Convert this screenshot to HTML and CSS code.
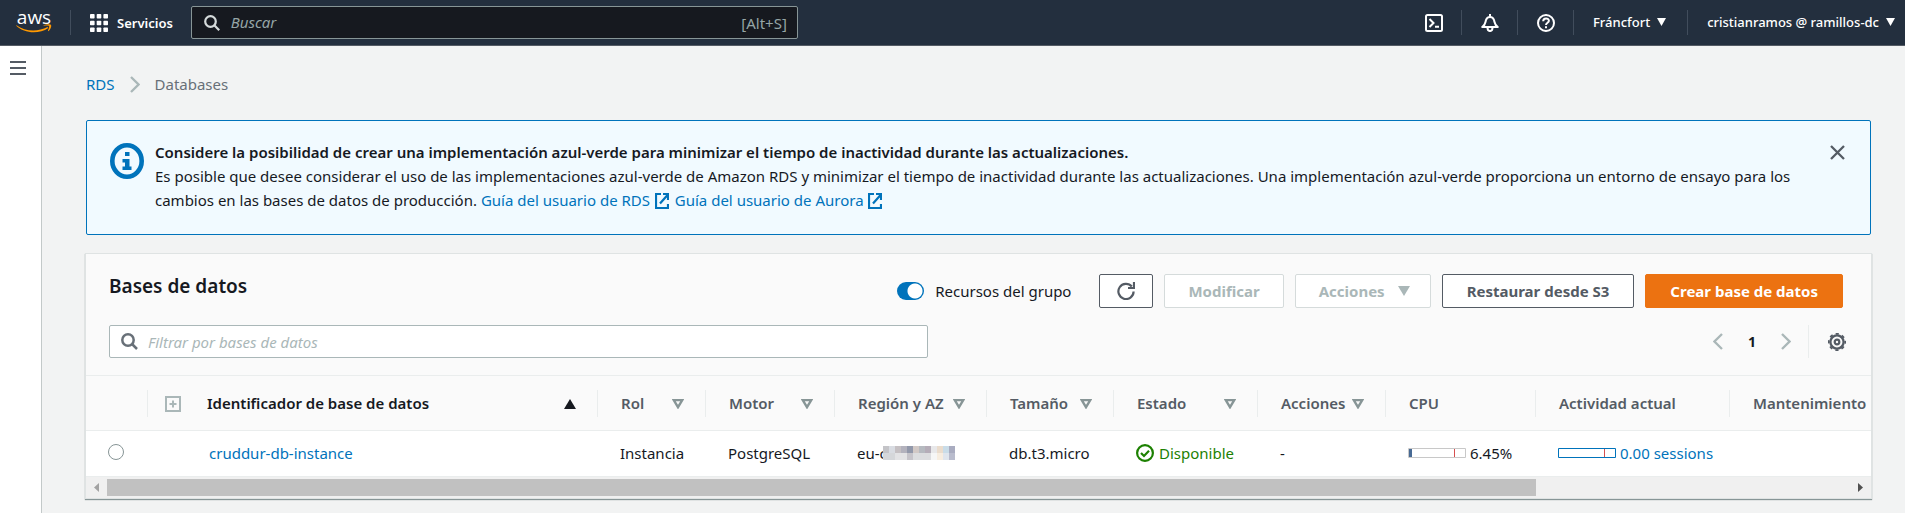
FILE: index.html
```html
<!DOCTYPE html>
<html lang="es">
<head>
<meta charset="utf-8">
<meta name="viewport" content="width=device-width, initial-scale=1">
<title>RDS - Databases</title>
<link rel="stylesheet" href="styles.css">
</head>
<body>
<header class="topbar">
  <a class="logo" href="#" aria-label="aws">
    <span class="logo-text">aws</span>
    <svg class="logo-smile" viewBox="0 0 36 9" aria-hidden="true"><path d="M0.5 1.2C9 7.6 22 8 31.5 3l.8 1C23 10.500 8 9.500.2 1.800z" fill="#f90"/><path d="M27.500 1.200C30 .2 34 0 35 .9c.7 1-.3 4.500-2.600 6.300l-.5-.4c.8-1.700 1.500-3.900 1.200-4.700-.5-.6-3.500-.5-5.400-.4z" fill="#f90"/></svg>
  </a>
  <button class="services" type="button">
    <svg viewBox="0 0 18 18" width="18" height="18" fill="#fff" aria-hidden="true"><rect width="4.600" height="4.600" rx=".8"/><rect x="6.700" width="4.600" height="4.600" rx=".8"/><rect x="13.400" width="4.600" height="4.600" rx=".8"/><rect y="6.700" width="4.600" height="4.600" rx=".8"/><rect x="6.700" y="6.700" width="4.600" height="4.600" rx=".8"/><rect x="13.400" y="6.700" width="4.600" height="4.600" rx=".8"/><rect y="13.400" width="4.600" height="4.600" rx=".8"/><rect x="6.700" y="13.400" width="4.600" height="4.600" rx=".8"/><rect x="13.400" y="13.400" width="4.600" height="4.600" rx=".8"/></svg>
    Servicios
  </button>
  <div class="search global-search">
    <svg viewBox="0 0 16 16" width="16" height="16" fill="none" stroke="#d5dbdb" stroke-width="2.200" aria-hidden="true"><circle cx="6.500" cy="6.500" r="5.300"/><path d="M10.300 10.300l4.900 4.900"/></svg>
    <input type="search" placeholder="Buscar" aria-label="Buscar">
    <span class="shortcut">[Alt+S]</span>
  </div>
  <nav class="tools" aria-label="Cuenta">
    <button class="tool" type="button" aria-label="CloudShell"><svg viewBox="0 0 18 18" width="18" height="18" fill="none" stroke="#fff" stroke-width="2" aria-hidden="true"><rect x="1" y="1" width="16" height="16" rx="1.500"/><path d="M4.500 5l4 4-4 4M10 12.700h4"/></svg></button>
    <button class="tool" type="button" aria-label="Notificaciones"><svg viewBox="0 0 18 18" width="18" height="18" fill="none" stroke="#fff" stroke-width="2" stroke-linejoin="round" aria-hidden="true"><path d="M1.200 13h15.600C13.500 11 13.800 8.500 13 6 12.400 4 11 2.900 9 2.900S5.600 4 5 6c-.8 2.500-.5 5-3.800 7zM6.500 13.500c0 4.700 5 4.700 5 0M9 0v3"/></svg></button>
    <button class="tool" type="button" aria-label="Ayuda"><svg viewBox="0 0 18 18" width="18" height="18" fill="none" stroke="#fff" stroke-width="2" aria-hidden="true"><circle cx="9" cy="9" r="8"/><path d="M6.200 7.200c0-3.800 5.700-3.500 5.700-.4C11.900 8.900 9 8.600 9 11M9 12.200v2"/></svg></button>
    <button class="tool tool-text region" type="button">Fráncfort <svg class="caret" viewBox="0 0 9 8" aria-hidden="true"><path d="M0 0h9L4.500 8z" fill="#fff"/></svg></button>
    <button class="tool tool-text account" type="button">cristianramos @ ramillos-dc <svg class="caret" viewBox="0 0 9 8" aria-hidden="true"><path d="M0 0h9L4.500 8z" fill="#fff"/></svg></button>
  </nav>
</header>

<div class="shell">
  <aside class="rail">
    <button class="menu" type="button" aria-label="Abrir navegación"><svg viewBox="0 0 16 14" width="16" height="14" fill="#545b64" aria-hidden="true"><path d="M0 0h16v2H0zM0 6h16v2H0zM0 12h16v2H0z"/></svg></button>
  </aside>
  <main class="content">
    <nav class="crumbs" aria-label="Ruta">
      <a href="#">RDS</a>
      <svg viewBox="0 0 10 17" width="10" height="17" fill="none" stroke="#aab7b8" stroke-width="2.300" aria-hidden="true"><path d="M1 1l7.500 7.500L1 16"/></svg>
      <span>Databases</span>
    </nav>

    <section class="notice">
      <svg class="notice-icon" viewBox="0 0 34 36" aria-hidden="true"><ellipse cx="17" cy="18" rx="14.700" ry="15.700" fill="none" stroke="#0073bb" stroke-width="4.600"/><path d="M15 9h4.500v4H15zM12.500 16h7v7.500h2V27h-9v-3.500H15v-4h-2.500z" fill="#0073bb"/></svg>
      <div class="notice-text">
        <strong>Considere la posibilidad de crear una implementación azul-verde para minimizar el tiempo de inactividad durante las actualizaciones.</strong>
        <p>Es posible que desee considerar el uso de las implementaciones azul-verde de Amazon RDS y minimizar el tiempo de inactividad durante las actualizaciones. Una implementación azul-verde proporciona un entorno de ensayo para los cambios en las bases de datos de producción. <a href="#">Guía del usuario de RDS <svg class="ext" viewBox="0 0 14 16" aria-hidden="true"><path d="M6 1H1v14h12v-4M8 1h5v6M13 1.500L5 10.500" fill="none" stroke="#0073bb" stroke-width="2.200"/></svg></a> <a href="#">Guía del usuario de Aurora <svg class="ext" viewBox="0 0 14 16" aria-hidden="true"><path d="M6 1H1v14h12v-4M8 1h5v6M13 1.500L5 10.500" fill="none" stroke="#0073bb" stroke-width="2.200"/></svg></a></p>
      </div>
      <button class="close" type="button" aria-label="Cerrar"><svg viewBox="0 0 15 15" width="15" height="15" stroke="#545b64" stroke-width="2.300" aria-hidden="true"><path d="M1 1l13 13M14 1L1 14"/></svg></button>
    </section>

    <section class="panel">
      <div class="panel-head">
        <h1>Bases de datos</h1>
        <label class="switch"><input type="checkbox" role="switch" checked>Recursos del grupo</label>
        <div class="actions">
          <button class="btn btn-icon" type="button" aria-label="Actualizar"><svg viewBox="0 0 18 18" width="18" height="18" fill="none" stroke="#545b64" stroke-width="2.200" aria-hidden="true"><path d="M16.600 9.500A7.600 7.600 0 1 1 14.800 4.500M17 0v6h-6"/></svg></button>
          <button class="btn" type="button" disabled>Modificar</button>
          <button class="btn btn-menu" type="button" disabled>Acciones <svg viewBox="0 0 12 10" width="12" height="10" aria-hidden="true"><path d="M0 0h12L6 10z" fill="#aab7b8"/></svg></button>
          <button class="btn" type="button">Restaurar desde S3</button>
          <button class="btn btn-primary" type="button">Crear base de datos</button>
        </div>
      </div>
      <div class="panel-tools">
        <div class="search filter">
          <svg viewBox="0 0 17 17" width="17" height="17" fill="none" stroke="#687078" stroke-width="2.500" aria-hidden="true"><circle cx="7" cy="7" r="5.700"/><path d="M11 11l5 5"/></svg>
          <input type="search" placeholder="Filtrar por bases de datos" aria-label="Filtrar por bases de datos">
        </div>
        <div class="pager">
          <button type="button" aria-label="Página anterior"><svg viewBox="0 0 10 17" width="10" height="17" fill="none" stroke="#aab7b8" stroke-width="2.300" aria-hidden="true"><path d="M9 1L1.500 8.500 9 16"/></svg></button>
          <button class="page" type="button">1</button>
          <button type="button" aria-label="Página siguiente"><svg viewBox="0 0 10 17" width="10" height="17" fill="none" stroke="#aab7b8" stroke-width="2.300" aria-hidden="true"><path d="M1 1l7.500 7.500L1 16"/></svg></button>
        </div>
        <button class="gear" type="button" aria-label="Preferencias"><svg viewBox="0 0 18 18" width="18" height="18" fill="none" stroke="#545b64" aria-hidden="true"><circle cx="9" cy="9" r="6.600" stroke-width="2.300"/><circle cx="9" cy="9" r="8.200" stroke-width="1.700" stroke-dasharray="3.220 3.220" stroke-dashoffset="1.600"/><circle cx="9" cy="9" r="2.300" stroke-width="2.200"/></svg></button>
      </div>

      <div class="table-wrap">
        <table>
          <colgroup><col class="c-pick"><col class="c-id"><col class="c-role"><col class="c-engine"><col class="c-region"><col class="c-size"><col class="c-state"><col class="c-acts"><col class="c-cpu"><col class="c-activity"><col class="c-maint"></colgroup>
          <thead>
            <tr>
              <th aria-label="Selección"></th>
              <th class="sorted"><div class="th"><svg class="expand" viewBox="0 0 16 16" width="16" height="16" fill="none" stroke="#aab7b8" stroke-width="2" aria-hidden="true"><path d="M1 1h14v14H1zM8 4.500v7M4.500 8h7"/></svg><span class="th-label">Identificador de base de datos</span><svg viewBox="0 0 12 10" width="12" height="10" aria-hidden="true"><path d="M6 0l6 10H0z" fill="#16191f"/></svg></div></th>
              <th><div class="th"><span class="th-label">Rol</span><svg class="sort" viewBox="0 0 12 10" aria-hidden="true"><path d="M1.700 1h8.600L6 8.200z"/></svg></div></th>
              <th><div class="th"><span class="th-label">Motor</span><svg class="sort" viewBox="0 0 12 10" aria-hidden="true"><path d="M1.700 1h8.600L6 8.200z"/></svg></div></th>
              <th><div class="th"><span class="th-label">Región y AZ</span><svg class="sort" viewBox="0 0 12 10" aria-hidden="true"><path d="M1.700 1h8.600L6 8.200z"/></svg></div></th>
              <th><div class="th"><span class="th-label">Tamaño</span><svg class="sort" viewBox="0 0 12 10" aria-hidden="true"><path d="M1.700 1h8.600L6 8.200z"/></svg></div></th>
              <th><div class="th"><span class="th-label">Estado</span><svg class="sort" viewBox="0 0 12 10" aria-hidden="true"><path d="M1.700 1h8.600L6 8.200z"/></svg></div></th>
              <th><div class="th"><span class="th-label">Acciones</span><svg class="sort" viewBox="0 0 12 10" aria-hidden="true"><path d="M1.700 1h8.600L6 8.200z"/></svg></div></th>
              <th><div class="th"><span class="th-label">CPU</span></div></th>
              <th><div class="th"><span class="th-label">Actividad actual</span></div></th>
              <th><div class="th"><span class="th-label">Mantenimiento</span></div></th>
            </tr>
          </thead>
          <tbody>
            <tr>
              <td class="pick"><input type="radio" name="db" aria-label="cruddur-db-instance"></td>
              <td class="id"><a href="#">cruddur-db-instance</a></td>
              <td>Instancia</td>
              <td>PostgreSQL</td>
              <td><div class="cell">eu-c<svg class="mosaic" viewBox="0 0 12 2" preserveAspectRatio="none" shape-rendering="crispEdges" aria-hidden="true"><path d="M0 0h1v1H0z" fill="#c4c4c8"/><path d="M1 0h1v1H1z" fill="#d9dce2"/><path d="M2 0h1v1H2z" fill="#c5c0c3"/><path d="M3 0h1v1H3z" fill="#b3b2bd"/><path d="M4 0h1v1H4z" fill="#9298aa"/><path d="M5 0h1v1H5z" fill="#d2c9c6"/><path d="M6 0h1v1H6z" fill="#b6bac0"/><path d="M7 0h1v1H7z" fill="#b5adb8"/><path d="M8 0h1v1H8z" fill="#e8e8ea"/><path d="M9 0h1v1H9z" fill="#eadccd"/><path d="M10 0h1v1h-1z" fill="#c9dce8"/><path d="M11 0h1v1h-1z" fill="#a9acc0"/><path d="M0 1h2v1H0z" fill="#d5d7da"/><path d="M2 1h2v1H2z" fill="#e3e3e5"/><path d="M4 1h1v1H4z" fill="#c6c4ca"/><path d="M5 1h3v1H5z" fill="#dcdddf"/><path d="M8 1h1v1H8z" fill="#f6f6f6"/><path d="M9 1h1v1H9z" fill="#f7ede0"/><path d="M10 1h1v1h-1z" fill="#dfe5ed"/><path d="M11 1h1v1h-1z" fill="#b9bccd"/></svg></div></td>
              <td>db.t3.micro</td>
              <td><div class="cell ok"><svg viewBox="0 0 18 18" width="18" height="18" fill="none" stroke="#1d8102" stroke-width="2.200" aria-hidden="true"><circle cx="9" cy="9" r="7.900"/><path d="M5 9l3 3 5-5.200"/></svg>Disponible</div></td>
              <td>-</td>
              <td><div class="cell"><svg class="meter" viewBox="0 0 58 10" aria-hidden="true"><path d="M.5.5h57v9H.5z" fill="#fff" stroke="#c8c8c8"/><path d="M1 1h3v8H1z" fill="#486a94"/><path d="M46 1h1v8h-1z" fill="#d64f4f"/></svg>6.45%</div></td>
              <td><a class="cell" href="#"><svg class="meter" viewBox="0 0 58 10" aria-hidden="true"><path d="M.5.5h57v9H.5z" fill="#fff" stroke="#0073bb"/><path d="M46 1h1v8h-1z" fill="#d64f4f"/></svg>0.00 sessions</a></td>
              <td></td>
            </tr>
          </tbody>
        </table>
      </div>
      <div class="scrollbar" aria-hidden="true">
        <svg viewBox="0 0 5 9" width="5" height="9"><path d="M5 0v9L0 4.500z" fill="#a3a3a3"/></svg>
        <div class="track"><div class="thumb"></div></div>
        <svg viewBox="0 0 5 9" width="5" height="9"><path d="M0 0v9l5-4.500z" fill="#505050"/></svg>
      </div>
    </section>
  </main>
</div>
</body>
</html>
```

FILE: styles.css
```css
* { box-sizing: border-box; }

body {
  margin: 0;
  min-height: 100vh;
  display: flex;
  flex-direction: column;
  background: #f2f3f3;
  color: #16191f;
  font: 15px/24px "Noto Sans", "Open Sans", sans-serif;
}

svg { display: block; flex: none; }
a { color: #0073bb; text-decoration: none; }
button {
  font: inherit;
  color: inherit;
  background: none;
  border: 0;
  padding: 0;
  cursor: pointer;
}
input { font: inherit; color: inherit; }

/* Top bar */
.topbar {
  display: flex;
  align-items: center;
  height: 46px;
  background: #232f3e;
  border-bottom: 1px solid #545b64;
  color: #fff;
  font-size: 13px;
  font-weight: 500;
}
.logo {
  display: flex;
  flex-direction: column;
  align-items: center;
  width: 71px;
  padding: 0 18px 0 16px;
  height: 25px;
  border-right: 1px solid #414d5c;
  color: #fff;
}
.logo-text { font: 500 19px/14px "Open Sans", sans-serif; }
.logo-smile { width: 36px; height: 9px; }
.services {
  display: flex;
  align-items: center;
  gap: 9px;
  padding: 0 18px 0 19px;
  font-weight: 600;
}
.search { display: flex; align-items: center; border-radius: 2px; }
.search input {
  flex: 1;
  min-width: 0;
  padding: 0;
  border: 0;
  outline: 0;
  background: none;
}
.search input::placeholder { font-style: italic; opacity: 1; }
.global-search {
  flex: 0 1 607px;
  height: 33px;
  padding: 0 10px 0 12px;
  gap: 11px;
  background: #16191f;
  border: 1px solid #879596;
  color: #95a5a6;
  font-size: 15px;
  font-weight: 400;
}
.global-search input { height: 24px; padding-bottom: 2px; }
.global-search input::placeholder { color: #95a5a6; }
.tools { display: flex; align-items: center; margin-left: auto; }
.tool {
  display: flex;
  align-items: center;
  gap: 7px;
  height: 25px;
  padding: 0 18px 0 19px;
  border-right: 1px solid #414d5c;
  white-space: nowrap;
}
.tool-text { padding: 0 21px 2px 19px; }
.account { padding-right: 10px; border-right: 0; }
.caret { width: 9px; height: 8px; }

/* Page frame */
.shell { display: flex; flex: 1; }
.rail {
  flex: 0 0 42px;
  background: #fff;
  border-right: 1px solid #c3c9c9;
}
.menu { display: block; padding: 15px 10px; }
.content { flex: 1; min-width: 0; padding: 26px 34px 13px 44px; }
.crumbs {
  display: flex;
  align-items: center;
  gap: 15px;
  margin-bottom: 24px;
  color: #687078;
}

/* Notice */
.notice {
  display: flex;
  align-items: flex-start;
  padding: 19px 24px 20px 23px;
  margin-bottom: 19px;
  min-height: 115px;
  background: #f1faff;
  border: 1px solid #0073bb;
  border-radius: 2px;
}
.notice-icon { width: 34px; height: 36px; margin: 3px 11px 0 0; }
.notice-text { flex: 1; }
.notice-text strong { display: block; font-weight: 600; }
.notice-text p { margin: 0; }
.ext {
  display: inline-block;
  width: 14px;
  height: 16px;
  margin: 0 2px 0 1px;
  vertical-align: -3px;
}
.close { padding: 5px 1px 5px 19px; }

/* Panel */
.panel {
  background: #fafafa;
  box-shadow: 0 0 0 1px #dfe3e3, 0 1px 1px 1px #879596;
}
.panel-head {
  display: flex;
  align-items: center;
  padding: 20px 28px 0 23px;
}
.panel-head h1 {
  margin: 0 auto 10px 0;
  font-size: 19px;
  line-height: 24px;
  font-weight: 600;
}
.switch { display: flex; align-items: center; gap: 11px; }
.switch input {
  appearance: none;
  width: 27px;
  height: 18px;
  margin: 0;
  border-radius: 9px;
  background: radial-gradient(circle at 18px 9px, #fff 7px, #0073bb 8px);
}
.actions { display: flex; gap: 11px; margin-left: 28px; }
.btn {
  display: flex;
  align-items: center;
  justify-content: center;
  height: 34px;
  padding: 0 24px;
  background: #fff;
  border: 1px solid #545b64;
  border-radius: 2px;
  color: #545b64;
  font-weight: 700;
  white-space: nowrap;
}
.btn:disabled { padding: 0 23px; border-color: #d5dbdb; color: #aab7b8; }
.btn-icon { padding: 0 17px; }
.btn.btn-menu { gap: 13px; padding-right: 20px; }
.btn-primary { background: #ec7211; border-color: #ec7211; color: #fff; }
.panel-tools {
  display: flex;
  align-items: center;
  padding: 17px 25px 17px 23px;
}
.filter {
  flex: 0 1 819px;
  height: 33px;
  padding: 0 11px;
  gap: 10px;
  background: #fff;
  border: 1px solid #aab7b8;
}
.filter input::placeholder { color: #aab7b8; }
.pager { display: flex; align-items: center; gap: 25px; margin-left: auto; }
.page { font-size: 14px; font-weight: 700; }
.gear {
  display: flex;
  align-items: center;
  height: 33px;
  margin-left: 17px;
  padding-left: 19px;
  border-left: 1px solid #eaeded;
}

/* Table */
.table-wrap { overflow: hidden; }
table {
  width: 2180px;
  table-layout: fixed;
  border-collapse: collapse;
  border-top: 1px solid #eaeded;
}
.c-pick { width: 61px; }
.c-id { width: 450px; }
.c-role { width: 108px; }
.c-engine { width: 129px; }
.c-region { width: 152px; }
.c-size { width: 127px; }
.c-state { width: 144px; }
.c-acts { width: 128px; }
.c-cpu { width: 150px; }
.c-activity { width: 194px; }
thead tr { border-bottom: 1px solid #eaeded; }
th { padding: 14px 0 13px; text-align: left; color: #545b64; font-weight: 600; }
.th {
  display: flex;
  align-items: center;
  height: 27px;
  padding: 0 21px 0 23px;
  border-left: 1px solid #eaeded;
  white-space: nowrap;
}
.th-label { flex: 1; padding-bottom: 2px; }
.sorted { color: #16191f; }
.sorted .th { padding-left: 17px; }
.expand { margin-right: 26px; }
.sort {
  width: 12px;
  height: 10px;
  fill: none;
  stroke: #879596;
  stroke-width: 2.4;
}
tbody tr { background: #fff; border-bottom: 1px solid #eaeded; }
td { height: 46px; padding: 0 0 1px 23px; white-space: nowrap; }
td.id { padding-left: 62px; }
td.pick { padding: 0 0 3px 22px; }
.pick input {
  appearance: none;
  display: block;
  width: 16px;
  height: 16px;
  margin: 0;
  border: 1px solid #879596;
  border-radius: 50%;
  background: #fff;
}
.cell { display: flex; align-items: center; }
.ok { gap: 5px; color: #1d8102; }
.meter { width: 58px; height: 10px; margin-right: 4px; }
.mosaic { width: 72px; height: 14px; margin-left: -4px; }

/* Horizontal scroll bar */
.scrollbar {
  display: flex;
  align-items: center;
  gap: 8px;
  height: 21px;
  padding: 0 8px;
  background: #f0f0f0;
}
.track { flex: 1; }
.thumb { width: 82%; height: 17px; background: #c1c1c1; }
```
